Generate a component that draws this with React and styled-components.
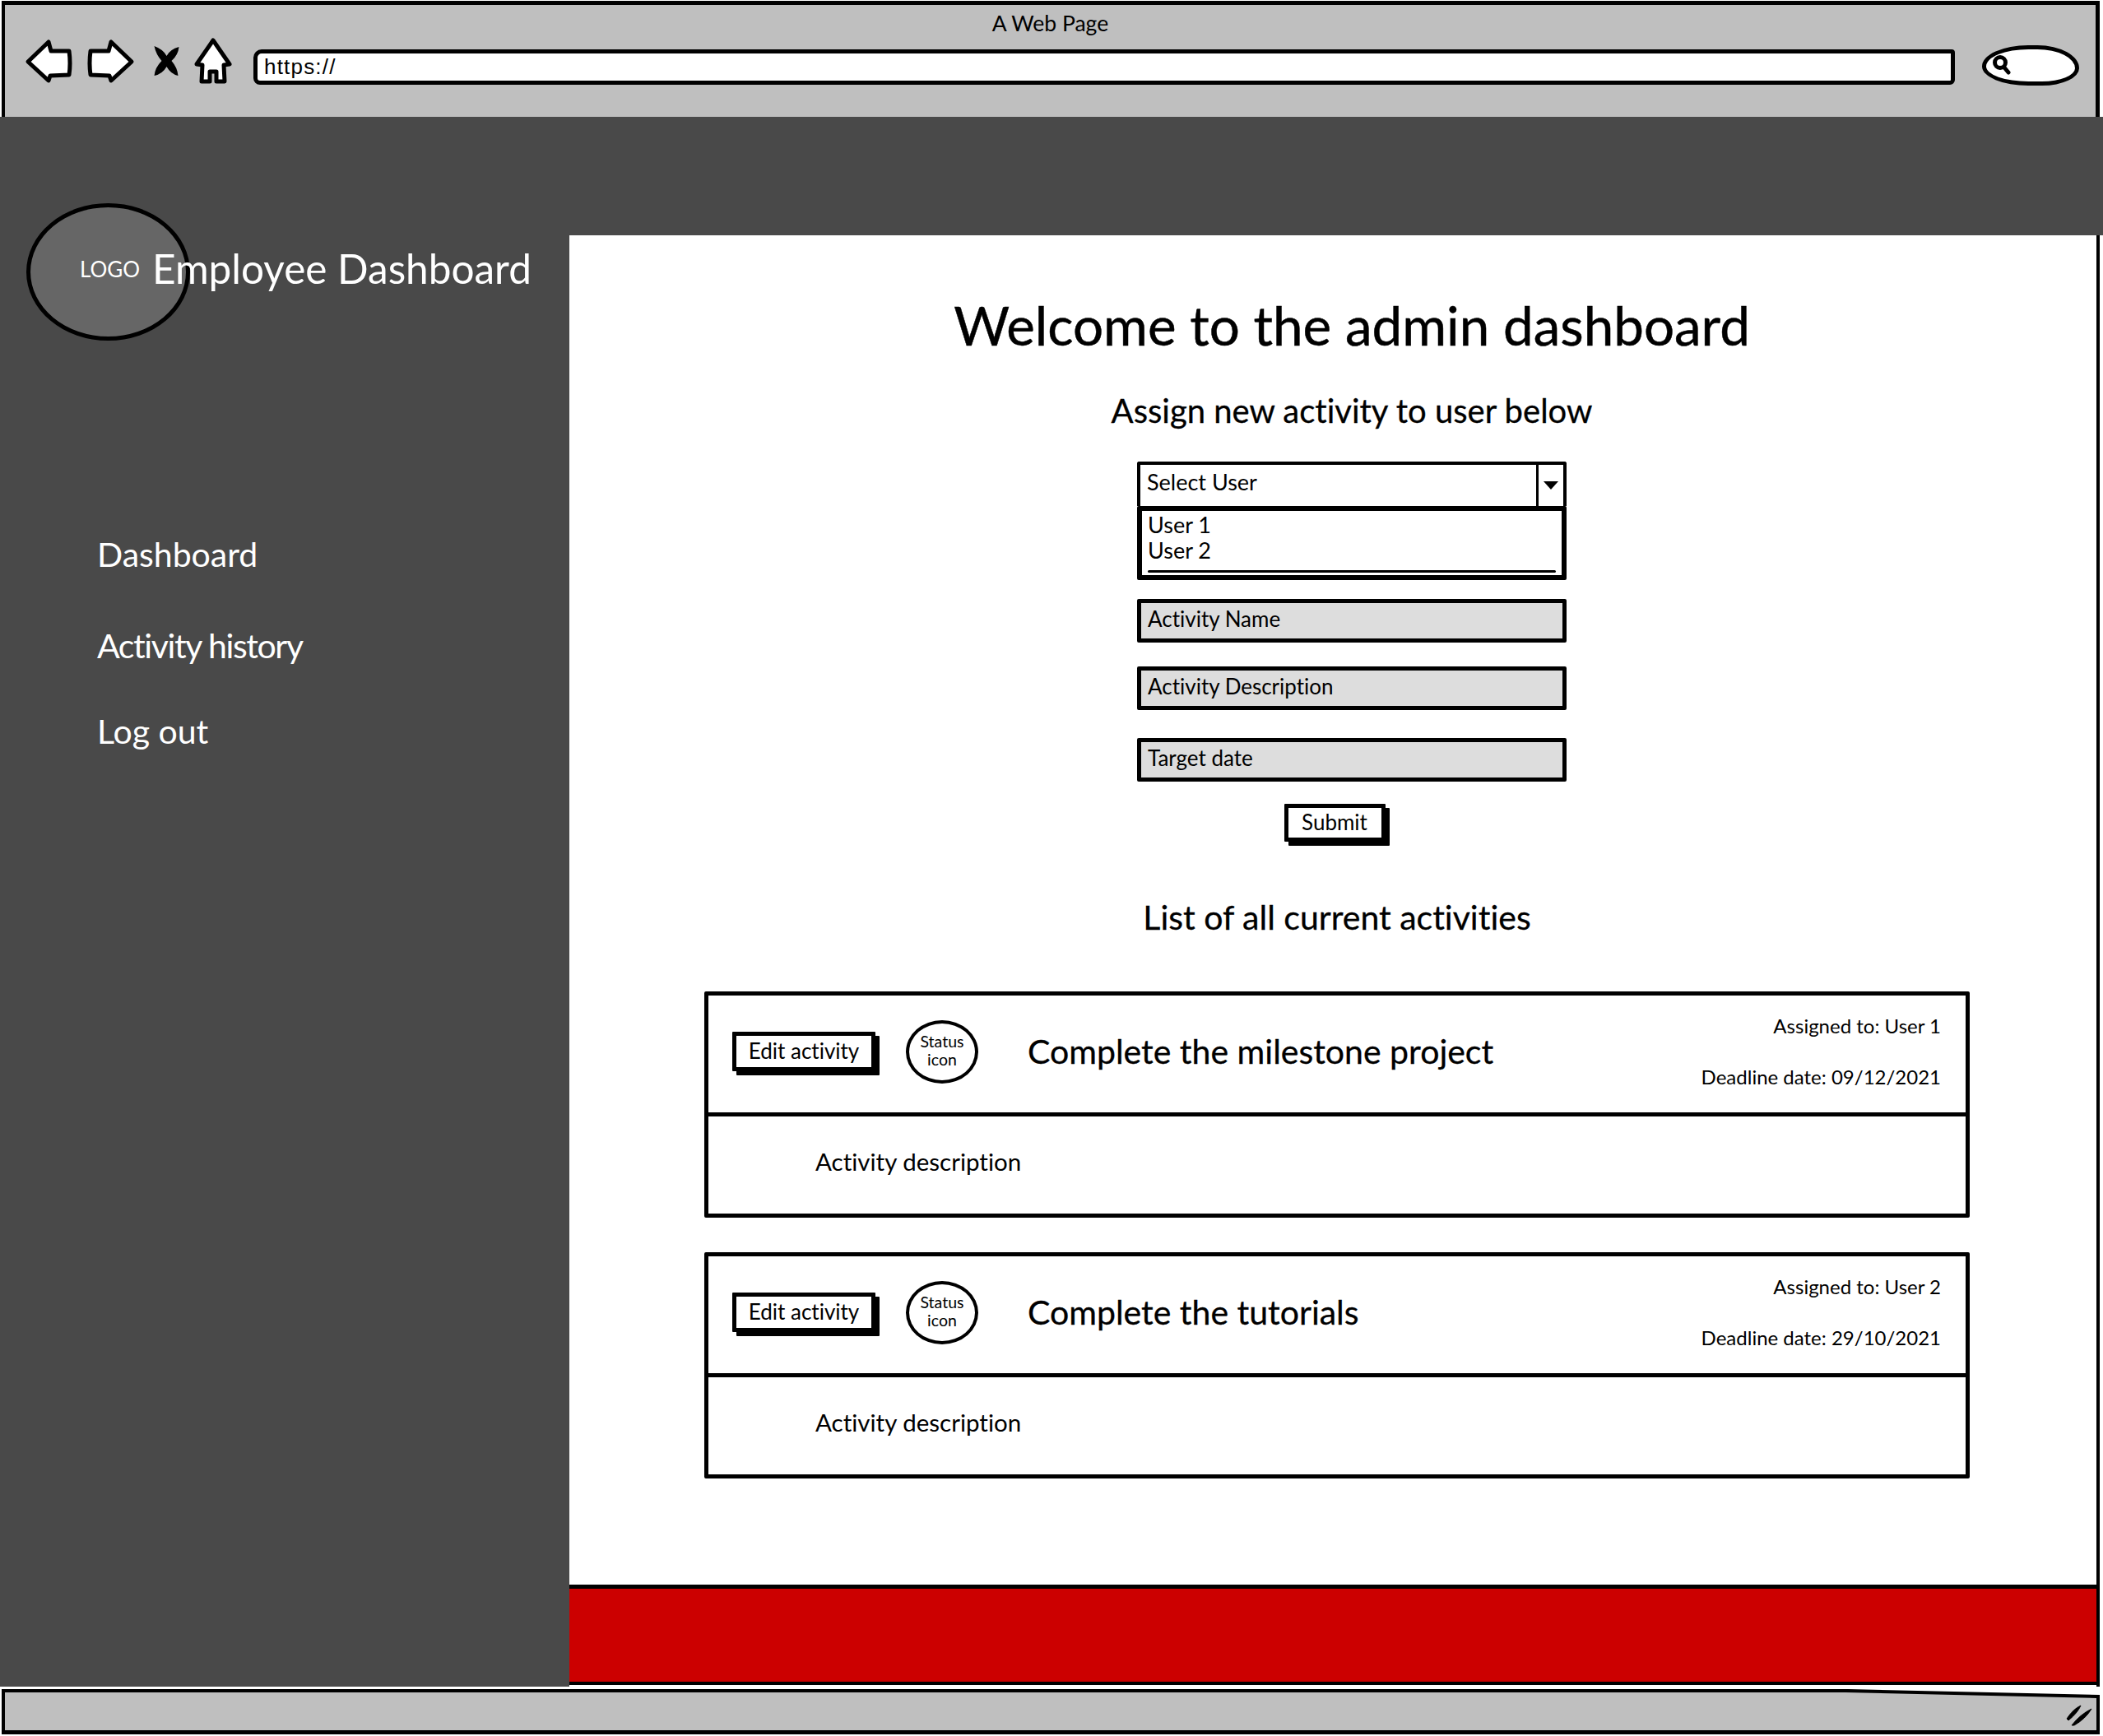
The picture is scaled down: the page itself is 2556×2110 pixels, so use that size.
import React from "react";
import styled, { createGlobalStyle } from "styled-components";

const FONT = `Lato, "Noto Sans", sans-serif`;

const GlobalStyle = createGlobalStyle`
    html, body {
        margin: 0;
        padding: 0;
        background: #fff;
        overflow: hidden;
    }
    * {
        box-sizing: border-box;
    }
`;

const Page = styled.div`
    width: 2556px;
    height: 2110px;
    display: flex;
    flex-direction: column;
    font-family: ${FONT};
    font-variant-ligatures: none;
    color: #000;
    background: #fff;
`;

/* browser chrome */
const Chrome = styled.header`
    height: 141px;
    margin: 1px 4px 0 2px;
    padding-top: 8px;
    background: #bfbfbf;
    border: solid #000;
    border-width: 5px 5px 0 4px;
    display: flex;
    flex-direction: column;
    align-items: center;
`;
const ChromeTitle = styled.div`
    height: 28px;
    line-height: 28px;
    font-size: 26.5px;
`;
const ChromeTools = styled.div`
    align-self: stretch;
    height: 62px;
    margin-top: 6px;
    padding: 0 0 0 26px;
    display: flex;
    align-items: center;
`;
const NavIcon = styled.svg`
    flex: none;
    margin: -10px ${(p) => p.$gap}px 0 0;
    overflow: visible;
`;
const UrlBar = styled.div`
    flex: none;
    width: 2068px;
    height: 43px;
    margin-top: 4px;
    padding-left: 8px;
    background: #fff;
    border: 5px solid #000;
    border-radius: 10px 4px 6px 8px;
    font-family: "Liberation Sans", sans-serif;
    font-size: 26px;
    letter-spacing: 1.2px;
    line-height: 30px;
    display: flex;
    align-items: center;
`;
const SearchPill = styled.div`
    flex: none;
    width: 118px;
    height: 49px;
    margin-left: 33px;
    padding-left: 8px;
    background: #fff;
    border: 5px solid #000;
    border-radius: 50% 45% 40% 50% / 55% 60% 45% 50%;
    display: flex;
    align-items: center;
`;

const Banner = styled.div`
    height: 144px;
    background: #494949;
`;

const Content = styled.div`
    flex: 1;
    min-height: 0;
    display: flex;
`;

/* left column */
const Sidebar = styled.aside`
    flex: none;
    width: 692px;
    background: #494949;
    color: #fff;
`;
const Brand = styled.div`
    margin: -39px 0 0 32px;
    display: flex;
    align-items: center;
`;
const LogoCircle = styled.div`
    flex: none;
    width: 199px;
    height: 167px;
    padding: 0 0 7px 4px;
    background: #666;
    border: 5px solid #000;
    border-radius: 50%;
    font-size: 26px;
    display: flex;
    align-items: center;
    justify-content: center;
`;
const BrandName = styled.div`
    position: relative;
    margin: 0 0 10px -46px;
    font-size: 49.5px;
    line-height: 60px;
    white-space: nowrap;
`;
const SideNav = styled.nav`
    padding-left: 118px;
    display: flex;
    flex-direction: column;
`;
const SideLink = styled.a`
    margin-top: ${(p) => p.$top}px;
    font-size: 41px;
    letter-spacing: ${(p) => p.$tight || 0}px;
    line-height: 46px;
`;

/* main column */
const Main = styled.main`
    flex: 1;
    min-width: 0;
    margin-right: 4px;
    border-right: 4px solid #000;
    display: flex;
    flex-direction: column;
`;
const MainInner = styled.div`
    padding: 74px 154px 0 164px;
    display: flex;
    flex-direction: column;
`;
const Intro = styled.section`
    padding-left: 36px;
    display: flex;
    flex-direction: column;
    align-items: center;
`;
const Heading = styled.h1`
    margin: 0;
    font-size: 65.5px;
    font-weight: 400;
    line-height: 70px;
    -webkit-text-stroke: 0.5px #000;
`;
const SubHeading = styled.h2`
    margin: ${(p) => p.$top}px 0 0;
    font-size: ${(p) => p.$size}px;
    font-weight: 400;
    line-height: 46px;
    text-align: center;
    -webkit-text-stroke: 0.3px #000;
`;
const SelectBox = styled.div`
    width: 522px;
    height: 54px;
    margin-top: 39px;
    border: solid #000;
    border-width: 4px 4px 0 4px;
    border-radius: 3px 3px 0 0;
    display: flex;
`;
const SelectText = styled.div`
    flex: 1;
    padding-left: 8px;
    font-size: 27px;
    line-height: 41px;
`;
const SelectArrow = styled.div`
    flex: none;
    width: 33px;
    border-left: 3px solid #000;
    display: flex;
    align-items: center;
    justify-content: center;
    &::before {
        content: "";
        border: 9px solid transparent;
        border-top: 10px solid #000;
        border-bottom: 0;
    }
`;
const OptionList = styled.div`
    width: 522px;
    height: 90px;
    padding: 1px 7px 0 7px;
    border: 6px solid #000;
    border-radius: 2px;
    display: flex;
    flex-direction: column;
    font-size: 27px;
    line-height: 31px;
    &::after {
        content: "";
        margin-top: 9px;
        height: 3px;
        background: #000;
        border-radius: 2px;
    }
`;
const Field = styled.div`
    width: 522px;
    height: 53px;
    margin-top: ${(p) => p.$top}px;
    padding: 0 0 6px 8px;
    background: #ddd;
    border: 5px solid #000;
    border-radius: 2px;
    font-size: 26px;
    display: flex;
    align-items: center;
`;
const SketchButton = styled.button`
    flex: none;
    height: ${(p) => p.$height}px;
    width: ${(p) => p.$width}px;
    padding: 0 0 2px;
    background: #fff;
    color: #000;
    border: 5px solid #000;
    border-radius: 1px;
    box-shadow: 5px 5px 0 #000;
    font-family: ${FONT};
    font-variant-ligatures: none;
    font-size: 26px;
    display: flex;
    align-items: center;
    justify-content: center;
`;
const SubmitRow = styled.div`
    margin: 27px 6px 0 0;
    display: flex;
    justify-content: center;
`;

const ActivityList = styled.div`
    margin-top: 67px;
    display: flex;
    flex-direction: column;
    gap: 42px;
`;
const Card = styled.article`
    height: 275px;
    border: 5px solid #000;
    border-radius: 2px;
    display: flex;
    flex-direction: column;
`;
const CardHead = styled.div`
    height: 147px;
    padding: 0 30px 6px 29px;
    border-bottom: 5px solid #000;
    flex: none;
    display: flex;
    align-items: center;
`;
const StatusIcon = styled.div`
    flex: none;
    width: 88px;
    height: 77px;
    margin-left: 37px;
    padding-bottom: 2px;
    border: 4px solid #000;
    border-radius: 50%;
    font-size: 19.5px;
    line-height: 22px;
    text-align: center;
    display: flex;
    align-items: center;
    justify-content: center;
`;
const CardTitle = styled.div`
    margin-left: 60px;
    font-size: 41px;
    line-height: 46px;
    -webkit-text-stroke: 0.3px #000;
`;
const CardMeta = styled.div`
    margin-left: auto;
    display: flex;
    flex-direction: column;
    align-items: flex-end;
    gap: 32px;
    font-size: 24px;
    line-height: 30px;
`;
const CardBody = styled.div`
    flex: 1;
    padding: 0 0 9px 130px;
    font-size: 29.5px;
    display: flex;
    align-items: center;
`;

const Footer = styled.footer`
    height: 122px;
    margin: auto 0 2px;
    background: #c00;
    border: solid #000;
    border-width: 5px 0 4px;
`;

/* bottom bar */
const StatusBar = styled.div`
    flex: none;
    height: 55px;
    margin: 3px 4px 2px 2px;
    padding: 4px 4px 5px;
    background: #000;
    clip-path: polygon(0 0, 88% 0, 100% 7px, 100% 100%, 0 100%);
    display: flex;
`;
const StatusFill = styled.div`
    flex: 1;
    padding: 0 5px 5px 0;
    background: #bfbfbf;
    clip-path: polygon(0 0, 88% 0, 100% 7px, 100% 100%, 0 100%);
    display: flex;
    align-items: flex-end;
    justify-content: flex-end;
`;

const activities = [
    { title: "Complete the milestone project", user: "User 1", deadline: "09/12/2021" },
    { title: "Complete the tutorials", user: "User 2", deadline: "29/10/2021" },
];

const BackIcon = ({ flip, gap }) => (
    <NavIcon $gap={gap} width="54" height="50" viewBox="0 0 54 50" style={flip ? { transform: "scaleX(-1)" } : undefined}>
        <path
            d="M2 26 L27 2 L30 13 L52 13 Q54 28 52 42 L29 43 L27 49 Z"
            fill="#fff"
            stroke="#000"
            strokeWidth="5"
            strokeLinejoin="round"
        />
    </NavIcon>
);

const CloseIcon = () => (
    <NavIcon $gap={18} width="33" height="38" viewBox="0 0 32 38">
        <path d="M1 1 Q12 5 16 13 Q20 5 31 2 Q30 12 22 19 Q29 27 30 37 Q21 35 16 26 Q11 35 1 37 Q2 27 10 19 Q3 11 1 1 Z" fill="#000" />
    </NavIcon>
);

const HomeIcon = () => (
    <NavIcon $gap={27} width="44" height="54" viewBox="0 0 44 54">
        <path
            d="M22 2 L42 31 L35 32 L36 52 L26 52 L26 40 L18 40 L18 52 L8 52 L9 32 L2 31 Z"
            fill="#fff"
            stroke="#000"
            strokeWidth="5"
            strokeLinejoin="round"
        />
    </NavIcon>
);

const SearchIcon = () => (
    <svg width="22" height="24" viewBox="0 0 22 24">
        <circle cx="9" cy="9" r="6.5" fill="none" stroke="#000" strokeWidth="5" />
        <path d="M14 15 L19 21" stroke="#000" strokeWidth="5" strokeLinecap="round" />
    </svg>
);

const ResizeIcon = () => (
    <svg width="32" height="26" viewBox="0 0 32 26">
        <path d="M1 17 Q9 5 18 1 Q14 10 3 19 Z M7 25 Q17 12 31 5 Q24 17 10 25 Z" fill="#000" stroke="#000" strokeWidth="1" />
    </svg>
);

function ActivityCard({ title, user, deadline }) {
    return (
        <Card>
            <CardHead>
                <SketchButton $width={174} $height={48}>Edit activity</SketchButton>
                <StatusIcon>Status<br />icon</StatusIcon>
                <CardTitle>{title}</CardTitle>
                <CardMeta>
                    <span>Assigned to: {user}</span>
                    <span>Deadline date: {deadline}</span>
                </CardMeta>
            </CardHead>
            <CardBody>Activity description</CardBody>
        </Card>
    );
}

export default function App() {
    return (
        <Page>
            <GlobalStyle />
            <Chrome>
                <ChromeTitle>A Web Page</ChromeTitle>
                <ChromeTools>
                    <BackIcon gap={22} />
                    <BackIcon flip gap={24} />
                    <CloseIcon />
                    <HomeIcon />
                    <UrlBar>https://</UrlBar>
                    <SearchPill><SearchIcon /></SearchPill>
                </ChromeTools>
            </Chrome>
            <Banner />
            <Content>
                <Sidebar>
                    <Brand>
                        <LogoCircle>LOGO</LogoCircle>
                        <BrandName>Employee Dashboard</BrandName>
                    </Brand>
                    <SideNav>
                        <SideLink $top={237}>Dashboard</SideLink>
                        <SideLink $top={65} $tight={-1.4}>Activity history</SideLink>
                        <SideLink $top={58}>Log out</SideLink>
                    </SideNav>
                </Sidebar>
                <Main>
                    <MainInner>
                        <Intro>
                            <Heading>Welcome to the admin dashboard</Heading>
                            <SubHeading $top={46} $size={40}>Assign new activity to user below</SubHeading>
                            <SelectBox>
                                <SelectText>Select User</SelectText>
                                <SelectArrow />
                            </SelectBox>
                            <OptionList>
                                <span>User 1</span>
                                <span>User 2</span>
                            </OptionList>
                            <Field $top={23}>Activity Name</Field>
                            <Field $top={29}>Activity Description</Field>
                            <Field $top={34}>Target date</Field>
                        </Intro>
                        <SubmitRow>
                            <SketchButton $width={123} $height={46}>Submit</SketchButton>
                        </SubmitRow>
                        <SubHeading $top={69} $size={41}>List of all current activities</SubHeading>
                        <ActivityList>
                            {activities.map((a) => (
                                <ActivityCard key={a.title} {...a} />
                            ))}
                        </ActivityList>
                    </MainInner>
                    <Footer />
                </Main>
            </Content>
            <StatusBar>
                <StatusFill>
                    <ResizeIcon />
                </StatusFill>
            </StatusBar>
        </Page>
    );
}
